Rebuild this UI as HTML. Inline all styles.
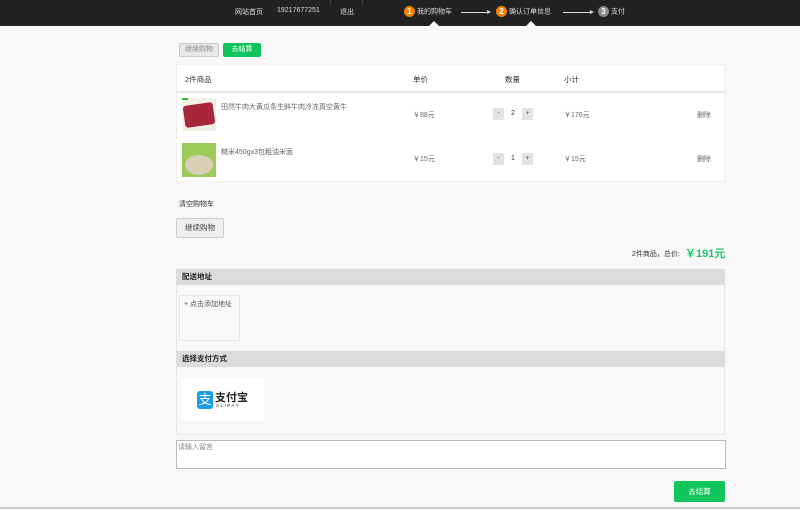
<!DOCTYPE html>
<html><head><meta charset="utf-8"><style>
*{margin:0;padding:0;box-sizing:border-box}
body{width:800px;height:510px;background:#f8f8f8;font-family:"Liberation Sans","Noto Sans CJK SC",sans-serif;font-size:7px;color:#333;position:relative;overflow:hidden}
.a{position:absolute;white-space:nowrap}
.hd{position:absolute;left:0;top:0;width:800px;height:26px;background:#222;color:#ddd}
.num{display:inline-block;width:11px;height:11px;border-radius:50%;background:#f08200;color:#fff;font-weight:bold;font-size:8px;text-align:center;line-height:11px;vertical-align:middle}
.arr{position:absolute;height:1px;background:#ddd}
.tri{position:absolute;width:0;height:0;border-left:5px solid transparent;border-right:5px solid transparent;border-bottom:5px solid #f8f8f8}
.btn{position:absolute;text-align:center;border-radius:2px}
.qty{position:absolute;width:40px;height:12px;background:#fff;line-height:12px}
.qty i{position:absolute;top:0;height:12px;width:11px;background:#e3e3e3;text-align:center;line-height:12px;color:#555;font-style:normal}
.qty b{position:absolute;left:11px;width:18px;top:0;text-align:center;font-weight:normal;line-height:12px}
.sec{position:absolute;left:176px;width:549px;height:16px;background:#dcdcdc;font-weight:bold;font-size:7.5px;line-height:16px;padding-left:6px;color:#222}
</style></head><body>
<div class="hd">
<div class="a" style="left:235px;top:7px">网站首页</div>
<div class="a" style="left:277px;top:7px">19217677251</div>
<div class="a" style="left:340px;top:7px">退出</div>
<div class="a" style="left:330px;top:0;width:1px;height:5px;background:#444"></div>
<div class="a" style="left:362px;top:0;width:1px;height:5px;background:#444"></div>
<div class="a" style="left:404px;top:6px;line-height:11px"><span class="num">1</span> 我的购物车</div>
<div class="arr" style="left:461px;top:12px;width:28px"></div>
<div class="a" style="left:487px;top:10px;border-left:4px solid #ddd;border-top:2.5px solid transparent;border-bottom:2.5px solid transparent"></div>
<div class="a" style="left:496px;top:6px;line-height:11px"><span class="num">2</span> 确认订单信息</div>
<div class="arr" style="left:563px;top:12px;width:28px"></div>
<div class="a" style="left:590px;top:10px;border-left:4px solid #ddd;border-top:2.5px solid transparent;border-bottom:2.5px solid transparent"></div>
<div class="a" style="left:598px;top:6px;line-height:11px"><span class="num" style="background:#888">3</span> 支付</div>
<div class="tri" style="left:429px;top:21px"></div>
<div class="tri" style="left:526px;top:21px"></div>
</div>

<div class="btn" style="left:179px;top:43px;width:40px;height:14px;background:#e8e8e8;border:1px solid #ccc;color:#888;line-height:12px">继续购物</div>
<div class="btn" style="left:223px;top:43px;width:38px;height:14px;background:#10c55c;color:#fff;line-height:14px">去结算</div>

<div class="a" style="left:176px;top:64px;width:549px;height:118px;background:#fff;border:1px solid #eee"></div>
<div class="a" style="left:176px;top:91px;width:549px;height:2px;background:#e8e8e8"></div>
<div class="a" style="left:185px;top:74px;font-size:7.5px">2件商品</div>
<div class="a" style="left:413px;top:74px;font-size:7.5px">单价</div>
<div class="a" style="left:505px;top:74px;font-size:7.5px">数量</div>
<div class="a" style="left:564px;top:74px;font-size:7.5px">小计</div>

<div class="a" style="left:182px;top:98px;width:34px;height:33px;background:#f3f1e6"><div style="position:absolute;left:2px;top:6px;width:30px;height:22px;background:#a8263a;border-radius:3px;transform:rotate(-8deg)"></div><div style="position:absolute;left:0;top:0;width:6px;height:2px;background:#3b3"></div></div>
<div class="a" style="left:221px;top:102px;color:#666">田然牛肉大黄瓜条生鲜牛肉冷冻真空黄牛</div>
<div class="a" style="left:413px;top:110px;color:#666">￥88元</div>
<div class="qty" style="left:493px;top:108px"><i style="left:0">-</i><b>2</b><i style="left:29px">+</i></div>
<div class="a" style="left:564px;top:110px;color:#666">￥176元</div>
<div class="a" style="left:697px;top:110px;color:#666">删除</div>

<div class="a" style="left:182px;top:143px;width:34px;height:34px;background:#9ccb5a"><div style="position:absolute;left:3px;top:12px;width:28px;height:20px;background:#d9cfb5;border-radius:50%"></div></div>
<div class="a" style="left:221px;top:147px;color:#666">糙米450gx3包粗油米面</div>
<div class="a" style="left:413px;top:154px;color:#666">￥15元</div>
<div class="qty" style="left:493px;top:153px"><i style="left:0">-</i><b>1</b><i style="left:29px">+</i></div>
<div class="a" style="left:564px;top:154px;color:#666">￥15元</div>
<div class="a" style="left:697px;top:154px;color:#666">删除</div>

<div class="a" style="left:179px;top:199px">清空购物车</div>
<div class="btn" style="left:176px;top:218px;width:48px;height:20px;background:#eee;border:1px solid #ccc;font-size:7.5px;line-height:18px;color:#444">继续购物</div>

<div class="a" style="left:632px;top:249px">2件商品，总价:</div>
<div class="a" style="left:685px;top:245px;color:#1fc46a;font-weight:bold;font-size:11px">￥191元</div>

<div class="a" style="left:176px;top:269px;width:549px;height:166px;border:1px solid #e6e6e6"></div>
<div class="sec" style="top:269px">配送地址</div>
<div class="a" style="left:179px;top:295px;width:61px;height:46px;border:1px solid #e6e6e6;padding:3px 4px;color:#555">+ 点击添加地址</div>
<div class="sec" style="top:351px">选择支付方式</div>
<div class="a" style="left:181px;top:378px;width:83px;height:43px;background:#fff">
<div style="position:absolute;left:16px;top:13px;width:16px;height:18px;background:#1a9de6;border-radius:3px;color:#fff;font-size:13px;line-height:18px;text-align:center">支</div>
<div style="position:absolute;left:34px;top:11px;font-size:11px;font-weight:bold;color:#222">支付宝</div>
<div style="position:absolute;left:35px;top:25px;font-size:4.5px;letter-spacing:1.5px;color:#222">ALIPAY</div>
</div>

<div class="a" style="left:176px;top:440px;width:550px;height:29px;background:#fff;border:1px solid #bbb;color:#888;padding:1px">请输入留言</div>
<div class="btn" style="left:674px;top:481px;width:51px;height:21px;background:#10c55c;color:#fff;line-height:21px;font-size:7.5px">去结算</div>
<div class="a" style="left:0;top:507px;width:800px;height:2px;background:#ccc"></div>
</body></html>
